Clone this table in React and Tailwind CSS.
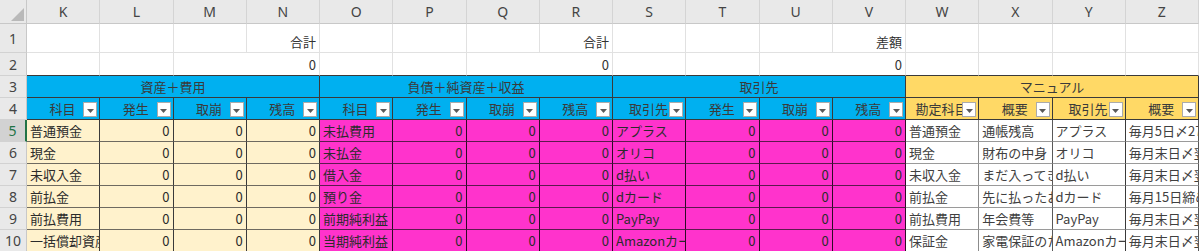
import React from 'react'

const LETTERS = ['K', 'L', 'M', 'N', 'O', 'P', 'Q', 'R', 'S', 'T', 'U', 'V', 'W', 'X', 'Y', 'Z']

const jp = "font-['Noto_Sans_CJK_JP','Noto_Sans',sans-serif]"

const ROWS = [
  {
    k: '普通預金', o: '未払費用', s: 'アプラス',
    w: '普通預金', x: '通帳残高', y: 'アプラス', z: '毎月5日〆27日払い',
  },
  {
    k: '現金', o: '未払金', s: 'オリコ',
    w: '現金', x: '財布の中身', y: 'オリコ', z: '毎月末日〆翌月払い',
  },
  {
    k: '未収入金', o: '借入金', s: 'd払い',
    w: '未収入金', x: 'まだ入ってきていないお金', y: 'd払い', z: '毎月末日〆翌月払い',
  },
  {
    k: '前払金', o: '預り金', s: 'dカード',
    w: '前払金', x: '先に払ったお金', y: 'dカード', z: '毎月15日締め翌月払い',
  },
  {
    k: '前払費用', o: '前期純利益', s: 'PayPay',
    w: '前払費用', x: '年会費等', y: 'PayPay', z: '毎月末日〆翌月払い',
  },
  {
    k: '一括償却資産', o: '当期純利益', s: 'Amazonカード',
    w: '保証金', x: '家電保証のため', y: 'Amazonカード', z: '毎月末日〆翌月払い',
  },
]

function FilterBtn() {
  return (
    <span className="absolute right-[2px] bottom-[2px] flex h-[15px] w-[14px] items-center justify-center border border-[#ababab] bg-white">
      <svg width="7" height="4" viewBox="0 0 7 4" className="mt-[3px]">
        <path d="M0 0h7L3.5 4z" fill="#5a5a5a" />
      </svg>
    </span>
  )
}

function RowHead({ n, active }) {
  return (
    <div
      className={
        "flex items-center justify-center border-b border-[#d2d2d2] font-['Noto_Sans',sans-serif] text-[14px] " +
        (active
          ? 'border-r-2 border-r-[#217346] bg-[#d2d2d2] text-[#217346]'
          : 'border-r border-r-[#c8c8c8] bg-[#e9e9e9] text-[#444]')
      }
    >
      {n}
    </div>
  )
}

function Cell({ children, className = '', right }) {
  return (
    <div
      className={
        'flex items-center overflow-hidden whitespace-nowrap border-r border-b px-[3px] text-[13px] leading-none ' +
        jp + ' ' + (right ? 'justify-end ' : '') + className
      }
    >
      {children}
    </div>
  )
}

function HeadCell({ children, yellow }) {
  return (
    <div
      className={
        'relative flex items-center justify-center overflow-hidden whitespace-nowrap border-r border-b border-[#3a3a3a] text-[13px] text-[#3a3a3a] ' +
        jp + ' ' + (yellow ? 'bg-[#ffd966]' : 'bg-[#00b0f0]')
      }
    >
      <span className="pr-[1px]">{children}</span>
      <FilterBtn />
    </div>
  )
}

export default function App() {
  const white = 'bg-white border-[#e1e1e1] text-[#333]'
  const row2 = 'bg-white border-r-[#e1e1e1] border-b-[#3a3a3a] text-[#333]'
  const cream = 'bg-[#fff2cc] border-r-[#3a3a3a] border-b-[#6e6a60] text-[#2b2b2b]'
  const pink = 'bg-[#ff33cc] border-r-[#2e0b27] border-b-[#5c1a4e] text-[#2b2b2b]'
  const manual = 'bg-white border-b-[#9a9a9a] text-[#404040]'

  return (
    <div className="h-[251px] w-[1200px] overflow-hidden bg-white">
      <div className="grid grid-cols-[27px_repeat(16,73.25px)] grid-rows-[24px_29px_23px_22px_22px_repeat(6,22px)]">
        {/* column header row */}
        <div className="relative border-r border-b border-[#c8c8c8] bg-[#e9e9e9]">
          <svg width="27" height="24" viewBox="0 0 27 24" className="absolute inset-0">
            <path d="M24 8v13H11z" fill="#b9b9b9" />
          </svg>
        </div>
        {LETTERS.map((l) => (
          <div
            key={l}
            className="flex items-center justify-center border-r border-b border-r-[#d4d4d4] border-b-[#c8c8c8] bg-[#e9e9e9] font-['Noto_Sans',sans-serif] text-[14px] text-[#444]"
          >
            {l}
          </div>
        ))}

        {/* row 1 */}
        <RowHead n={1} />
        {LETTERS.map((l, i) => (
          <Cell key={l} right className={white + ' items-end pb-[4px]'}>
            {i === 3 || i === 7 ? '合計' : i === 11 ? '差額' : ''}
          </Cell>
        ))}

        {/* row 2 */}
        <RowHead n={2} />
        <Cell className={row2} />
        <Cell className={row2} />
        <Cell right className={row2 + ' col-span-2'}>0</Cell>
        <Cell className={row2} />
        <Cell className={row2} />
        <Cell right className={row2 + ' col-span-2'}>0</Cell>
        <Cell className={row2} />
        <Cell className={row2} />
        <Cell right className={row2 + ' col-span-2 border-r-[#3a3a3a]'}>0</Cell>
        <Cell className={row2} />
        <Cell className={row2} />
        <Cell className={row2} />
        <Cell className={row2} />

        {/* row 3 group titles */}
        <RowHead n={3} />
        <Cell className="col-span-4 justify-center bg-[#00b0f0] border-[#3a3a3a] text-[#3a3a3a]">資産＋費用</Cell>
        <Cell className="col-span-4 justify-center bg-[#00b0f0] border-[#3a3a3a] text-[#3a3a3a]">負債＋純資産＋収益</Cell>
        <Cell className="col-span-4 justify-center bg-[#00b0f0] border-[#3a3a3a] text-[#3a3a3a]">取引先</Cell>
        <Cell className="col-span-4 justify-center bg-[#ffd966] border-[#3a3a3a] text-[#3a3a3a]">マニュアル</Cell>

        {/* row 4 column titles */}
        <RowHead n={4} />
        {['科目', '発生', '取崩', '残高', '科目', '発生', '取崩', '残高', '取引先', '発生', '取崩', '残高'].map((t, i) => (
          <HeadCell key={i}>{t}</HeadCell>
        ))}
        {['勘定科目', '概要', '取引先', '概要'].map((t, i) => (
          <HeadCell key={'m' + i} yellow>{t}</HeadCell>
        ))}

        {/* data rows */}
        {ROWS.map((r, i) => (
          <React.Fragment key={i}>
            <RowHead n={i + 5} active={i === 0} />
            <Cell className={cream}>{r.k}</Cell>
            <Cell right className={cream}>0</Cell>
            <Cell right className={cream}>0</Cell>
            <Cell right className={cream}>0</Cell>
            <Cell className={pink}>{r.o}</Cell>
            <Cell right className={pink}>0</Cell>
            <Cell right className={pink}>0</Cell>
            <Cell right className={pink}>0</Cell>
            <Cell className={pink}>{r.s}</Cell>
            <Cell right className={pink}>0</Cell>
            <Cell right className={pink}>0</Cell>
            <Cell right className={pink}>0</Cell>
            <Cell className={manual + ' border-r-[#8c8c8c]'}>{r.w}</Cell>
            <Cell className={manual + ' border-r-[#595959]'}>{r.x}</Cell>
            <Cell className={manual + ' border-r-[#3a3a3a]'}>{r.y}</Cell>
            <Cell className={manual + ' border-r-[#595959]'}>{r.z}</Cell>
          </React.Fragment>
        ))}
      </div>
    </div>
  )
}
